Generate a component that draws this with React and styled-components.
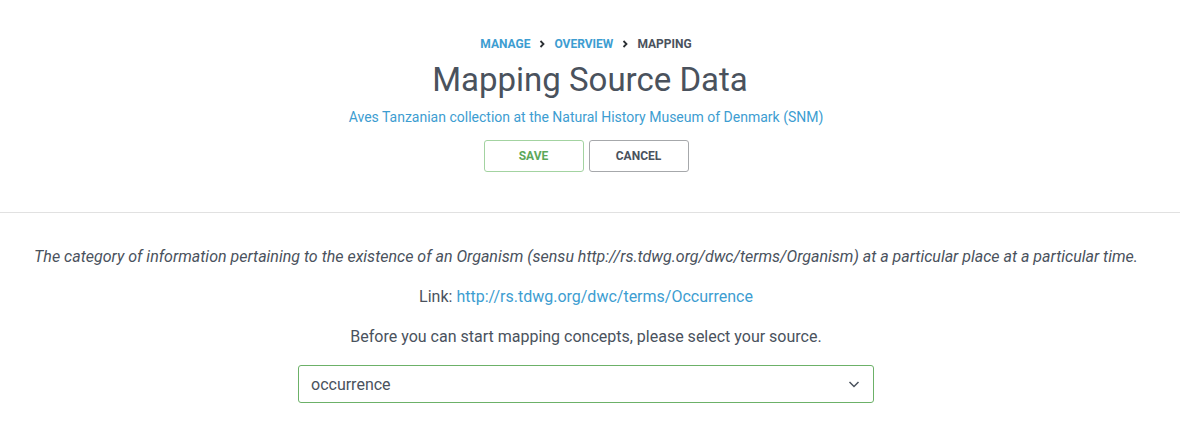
import styled, { createGlobalStyle } from 'styled-components';

const GlobalStyle = createGlobalStyle`
  body {
    margin: 0;
    background: #fff;
    font-family: Roboto, "Liberation Sans", sans-serif;
    color: #4a525d;
  }
`;

const Header = styled.header`
  display: flex;
  flex-direction: column;
  align-items: center;
  padding: 37px 8px 40px 0;
  border-bottom: 1px solid #e1e1e1;
`;

const Crumbs = styled.nav`
  display: flex;
  align-items: center;
  gap: 8px;
  font-size: 12px;
  font-weight: 700;
  text-transform: uppercase;
`;

const Crumb = styled.a`
  color: ${(p) => (p.$current ? '#4a525d' : '#3d9dd1')};
  text-decoration: none;
`;

const Chevron = styled.svg`
  width: 8px;
  height: 8px;
`;

const Title = styled.h1`
  margin: 9px 0 0;
  padding-left: 8px;
  font-size: 33px;
  font-weight: 400;
  line-height: 40px;
  color: #4a525d;
`;

const Subtitle = styled.a`
  margin-top: 9px;
  font-size: 14px;
  color: #3d9dd1;
  text-decoration: none;
`;

const Actions = styled.div`
  display: flex;
  gap: 5px;
  margin-top: 15px;
`;

const Button = styled.button`
  width: 100px;
  height: 32px;
  background: #fff;
  border: 1px solid ${(p) => (p.$primary ? '#a3d3a1' : '#a6a8ab')};
  border-radius: 3px;
  color: ${(p) => (p.$primary ? '#5da85a' : '#4a525d')};
  font-family: inherit;
  font-size: 12px;
  font-weight: 700;
  text-transform: uppercase;
  cursor: pointer;
`;

const Body = styled.main`
  display: flex;
  flex-direction: column;
  align-items: center;
  padding: 34px 8px 0 0;
  font-size: 16px;
`;

const Description = styled.p`
  margin: 0;
  font-style: italic;
  line-height: 20px;
`;

const Line = styled.p`
  margin: 20px 0 0;
  line-height: 20px;
`;

const Link = styled.a`
  color: #3d9dd1;
  text-decoration: none;
`;

const SelectWrap = styled.div`
  position: relative;
  width: 576px;
  margin-top: 18px;
`;

const Select = styled.select`
  appearance: none;
  width: 100%;
  height: 38px;
  padding: 0 36px 0 12px;
  border: 1px solid #6cb168;
  border-radius: 3px;
  background: #fff;
  font-family: inherit;
  font-size: 16px;
  color: #4a525d;
`;

const Caret = styled.svg`
  position: absolute;
  right: 14px;
  top: 14px;
  width: 12px;
  height: 10px;
  pointer-events: none;
`;

function ChevronIcon() {
  return (
    <Chevron viewBox="0 0 8 8">
      <path d="M2.5 1 L5.5 4 L2.5 7" fill="none" stroke="#2b2f33" strokeWidth="1.8" />
    </Chevron>
  );
}

export default function App() {
  return (
    <>
      <GlobalStyle />
      <Header>
        <Crumbs>
          <Crumb href="#">Manage</Crumb>
          <ChevronIcon />
          <Crumb href="#">Overview</Crumb>
          <ChevronIcon />
          <Crumb $current>Mapping</Crumb>
        </Crumbs>
        <Title>Mapping Source Data</Title>
        <Subtitle href="#">Aves Tanzanian collection at the Natural History Museum of Denmark (SNM)</Subtitle>
        <Actions>
          <Button $primary>Save</Button>
          <Button>Cancel</Button>
        </Actions>
      </Header>
      <Body>
        <Description>
          The category of information pertaining to the existence of an Organism (sensu
          http://rs.tdwg.org/dwc/terms/Organism) at a particular place at a particular time.
        </Description>
        <Line>
          Link: <Link href="#">http://rs.tdwg.org/dwc/terms/Occurrence</Link>
        </Line>
        <Line>Before you can start mapping concepts, please select your source.</Line>
        <SelectWrap>
          <Select defaultValue="occurrence">
            <option value="occurrence">occurrence</option>
          </Select>
          <Caret viewBox="0 0 12 10">
            <path d="M1.5 3 L6 7.5 L10.5 3" fill="none" stroke="#4a525d" strokeWidth="1.5" />
          </Caret>
        </SelectWrap>
      </Body>
    </>
  );
}
